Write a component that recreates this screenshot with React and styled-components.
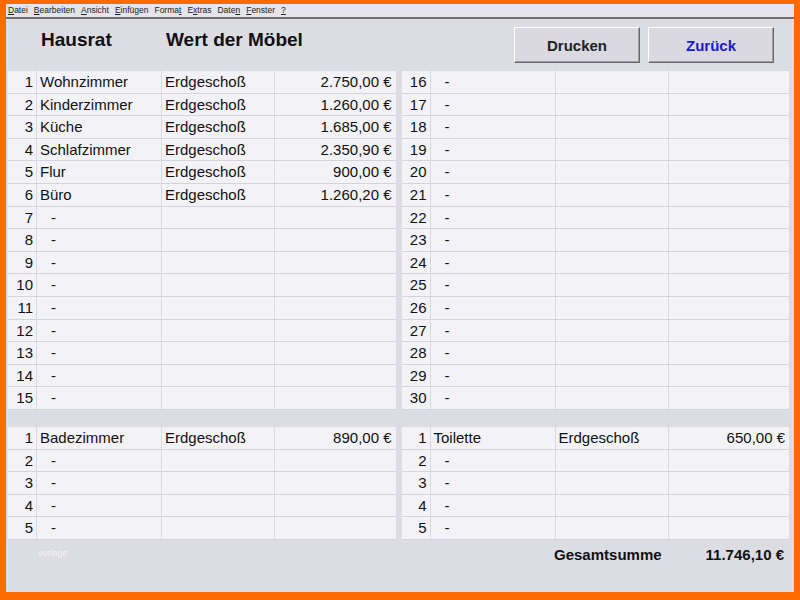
import React from 'react';
import styled, { createGlobalStyle } from 'styled-components';

const Global = createGlobalStyle`
  html, body { margin: 0; padding: 0; }
  body { font-family: "Liberation Sans", Arial, sans-serif; background: #ff6a00; }
`;

const Frame = styled.div`
  width: 800px; height: 600px; box-sizing: border-box;
  padding: 4px 6px 8px 6px; background: #ff6a00;
`;
const Win = styled.div`
  height: 100%; background: #dcdce3; display: flex; flex-direction: column;
`;
const Menu = styled.div`
  height: 13px; background: #e4e4ea; border-bottom: 2px solid #707070;
  display: flex; gap: 6px; padding-left: 2px; font-size: 8.5px; line-height: 13px; color: #222;
  u { text-decoration: underline; }
`;
const Header = styled.div`
  height: 52px; display: flex; align-items: flex-start; padding-top: 9px; box-sizing: border-box;
`;
const Title = styled.div`
  font-size: 19px; font-weight: bold; color: #111; width: ${p => p.w}px; margin-left: ${p => p.ml || 0}px; padding-top: 1px;
`;
const Buttons = styled.div`
  margin-left: auto; margin-right: 20px; display: flex; gap: 8px; margin-top: -1px;
`;
const Btn = styled.div`
  width: 126px; height: 36px; box-sizing: border-box; background: #d9d9df;
  border: 1px solid #fff; border-right-color: #666; border-bottom-color: #666;
  box-shadow: inset -1px -1px 0 #a0a0a8;
  display: flex; align-items: center; justify-content: center;
  font-size: 15px; font-weight: bold; color: ${p => p.blue ? '#1a1acc' : '#222'};
`;
const Pair = styled.div`
  display: flex; gap: 6px; padding: 0 5px 0 2px;
`;
const Table = styled.div`
  flex: 1; display: flex; flex-direction: column;
`;
const Row = styled.div`
  height: 22.6px; box-sizing: border-box; display: grid;
  grid-template-columns: 29px 125px 113px 1fr;
  background: #f3f3f7; border-bottom: 1px solid #d4d4dc; font-size: 15px; color: #111;
`;
const Cell = styled.div`
  line-height: 22px; padding: 0 4px 0 ${p => p.pl || 3}px; white-space: nowrap;
  text-align: ${p => p.right ? 'right' : 'left'};
  border-right: ${p => p.last ? 'none' : '1px solid #d8d8e0'};
`;
const Gap = styled.div` height: 17px; `;
const Footer = styled.div`
  display: flex; align-items: center; height: 30px; padding: 0 10px 0 32px;
  font-size: 15px; font-weight: bold; color: #111;
`;
const Faint = styled.span` font-size: 9px; color: #f4f4f8; font-weight: normal; margin-top: -4px; `;

const fill = (items, n) => Array.from({ length: n }, (_, i) => items[i] || null);

const Tbl = ({ start, items, n }) => (
  <Table>
    {fill(items, n).map((it, i) => (
      <Row key={i}>
        <Cell right pl={0} style={{ paddingRight: 3 }}>{start + i}</Cell>
        <Cell pl={it ? 3 : 14}>{it ? it[0] : '-'}</Cell>
        <Cell>{it ? 'Erdgeschoß' : ''}</Cell>
        <Cell right last>{it ? it[1] + ' €' : ''}</Cell>
      </Row>
    ))}
  </Table>
);

const rooms = [
  ['Wohnzimmer', '2.750,00'], ['Kinderzimmer', '1.260,00'], ['Küche', '1.685,00'],
  ['Schlafzimmer', '2.350,90'], ['Flur', '900,00'], ['Büro', '1.260,20'],
];

export default function App() {
  return (
    <Frame>
      <Global />
      <Win>
        <Menu>
          <span><u>D</u>atei</span><span><u>B</u>earbeiten</span><span><u>A</u>nsicht</span>
          <span><u>E</u>infügen</span><span>Forma<u>t</u></span><span>E<u>x</u>tras</span>
          <span>Date<u>n</u></span><span><u>F</u>enster</span><span><u>?</u></span>
        </Menu>
        <Header>
          <Title w={125} ml={35}>Hausrat</Title>
          <Title w={200}>Wert der Möbel</Title>
          <Buttons>
            <Btn>Drucken</Btn>
            <Btn blue>Zurück</Btn>
          </Buttons>
        </Header>
        <Pair>
          <Tbl start={1} items={rooms} n={15} />
          <Tbl start={16} items={[]} n={15} />
        </Pair>
        <Gap />
        <Pair>
          <Tbl start={1} items={[['Badezimmer', '890,00']]} n={5} />
          <Tbl start={1} items={[['Toilette', '650,00']]} n={5} />
        </Pair>
        <Footer>
          <Faint>vorlage</Faint>
          <span style={{ marginLeft: 'auto' }}>Gesamtsumme</span>
          <span style={{ marginLeft: 44 }}>11.746,10 €</span>
        </Footer>
      </Win>
    </Frame>
  );
}
